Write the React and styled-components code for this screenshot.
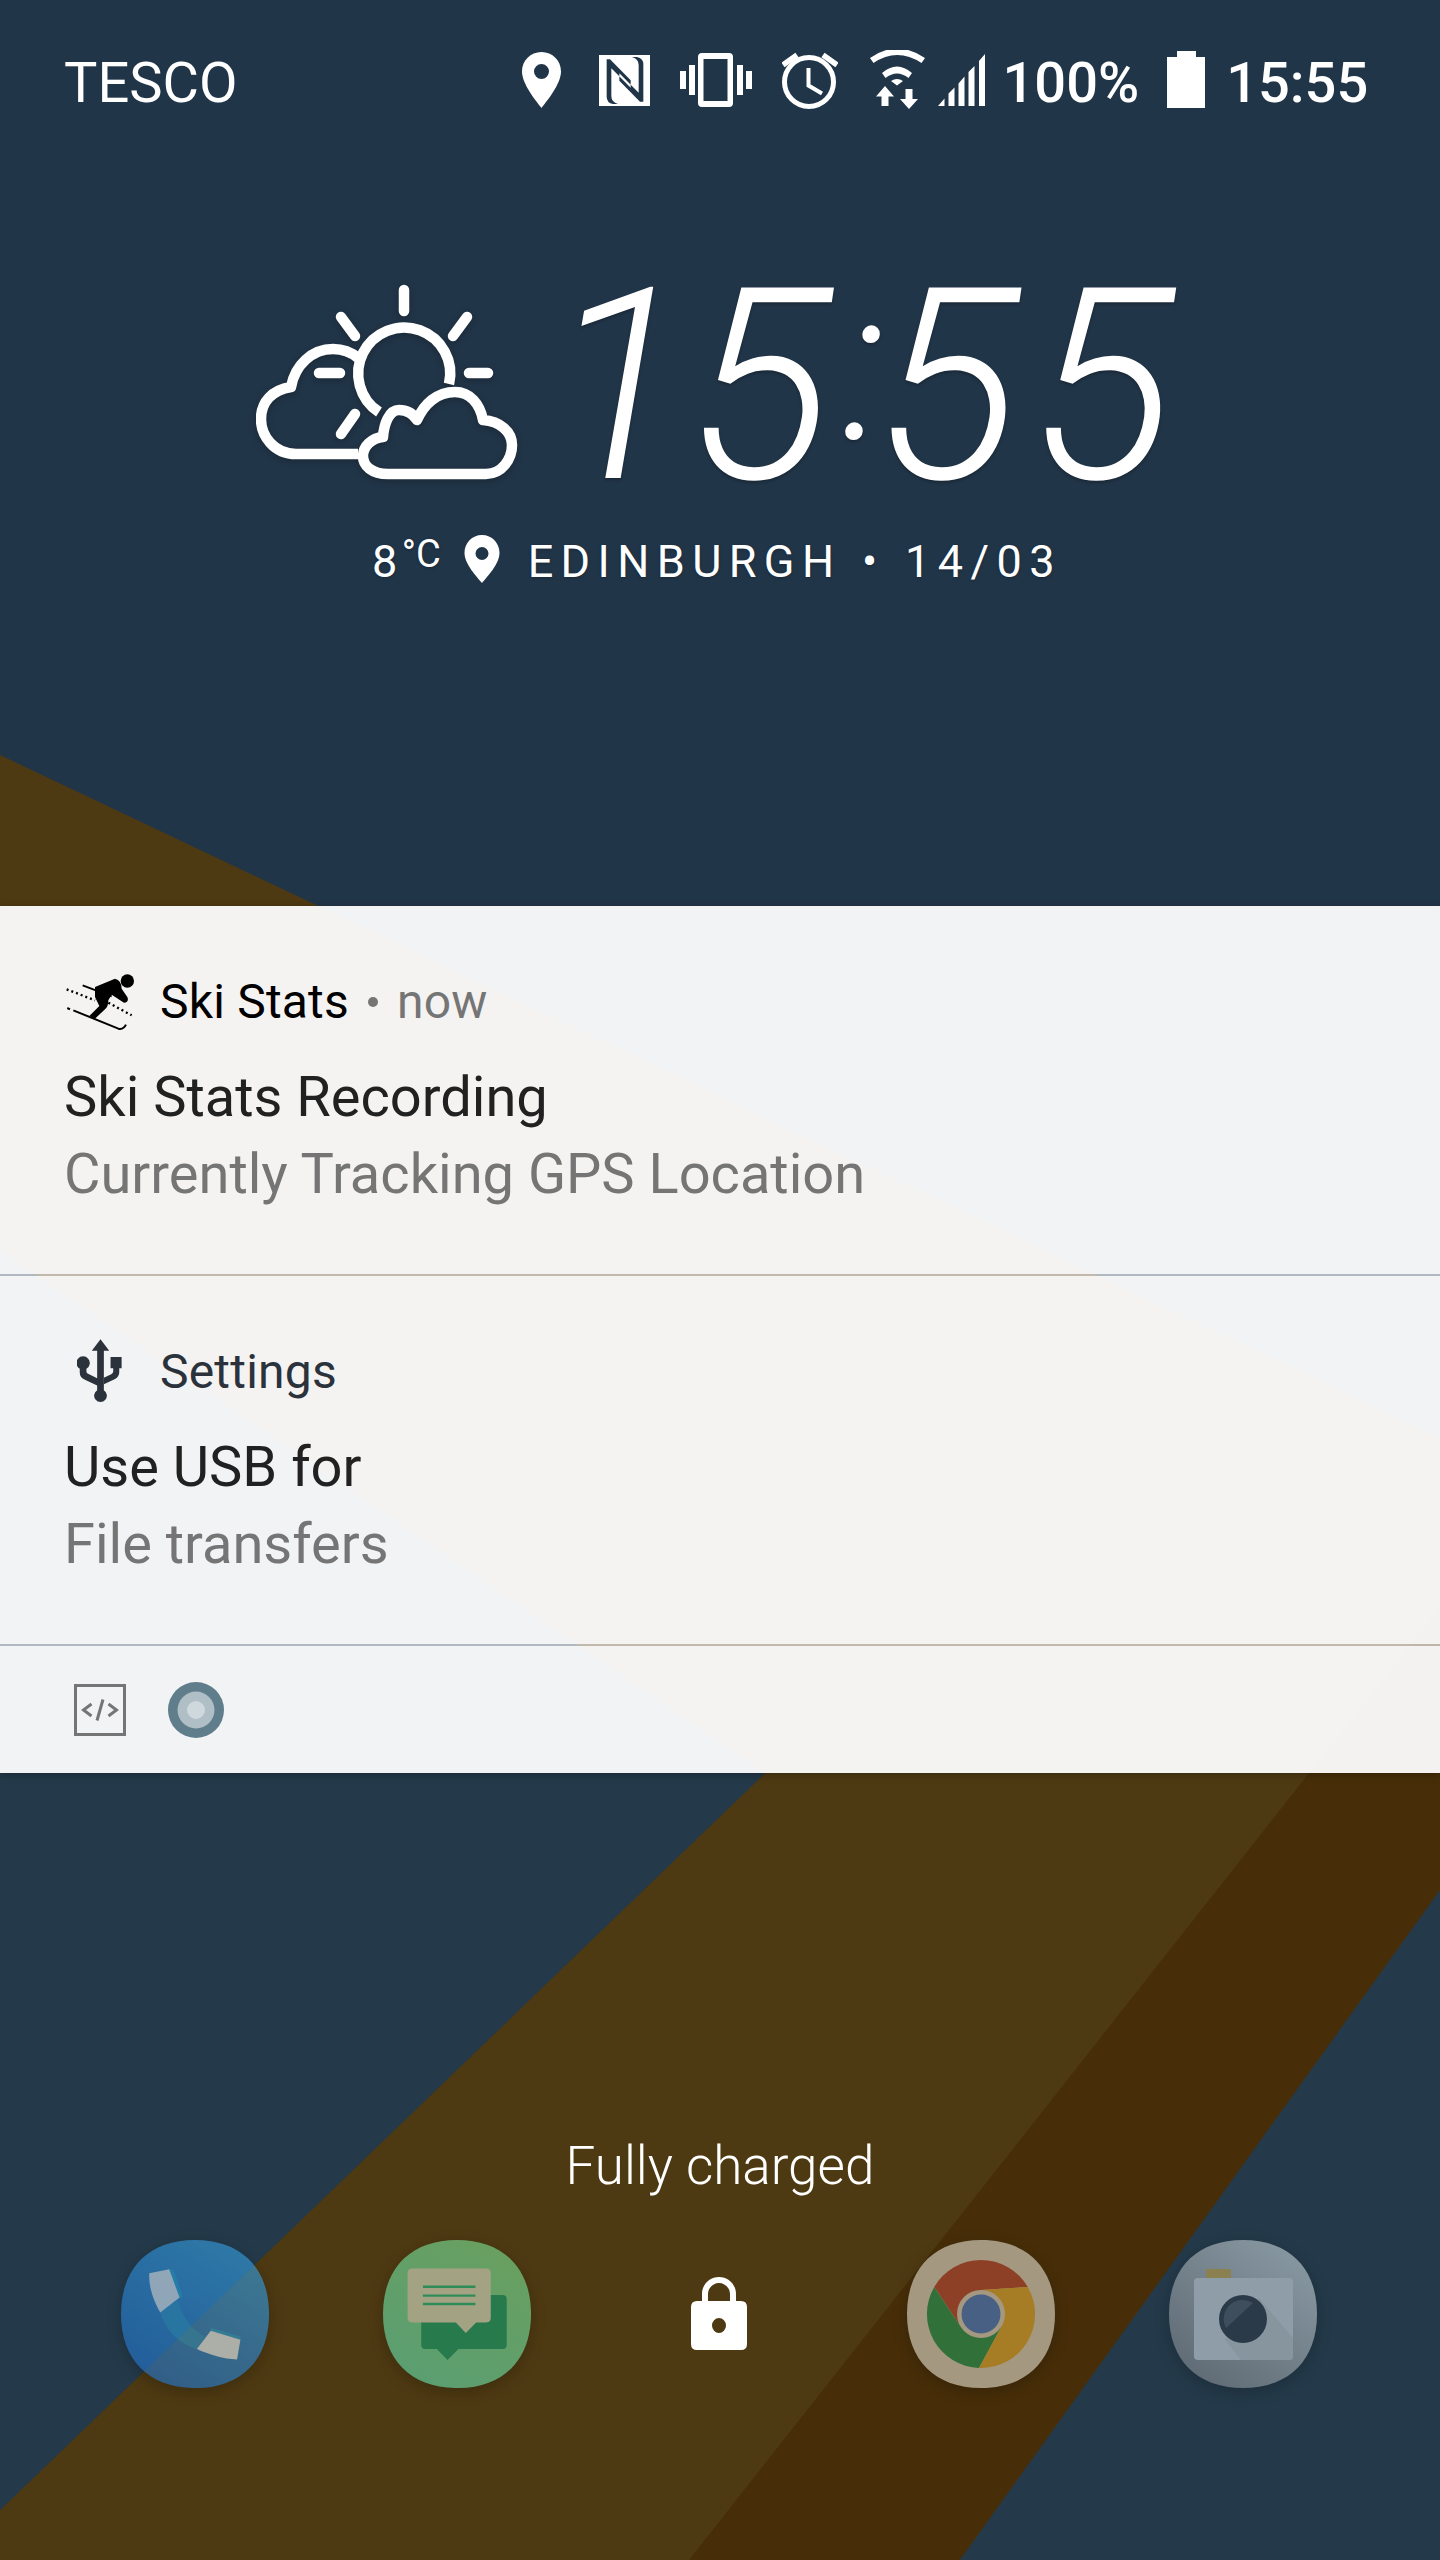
import React from "react";
import styled, { createGlobalStyle } from "styled-components";

const Global = createGlobalStyle`
  html, body { margin: 0; padding: 0; background: #213548; }
  body { font-family: Roboto, "Liberation Sans", sans-serif; }
`;

const Screen = styled.div`
  position: relative;
  width: 1440px;
  height: 2560px;
  overflow: hidden;
  background: #213548;
  color: #fff;
  display: flex;
  flex-direction: column;
`;
const WallpaperArt = styled.svg`
  position: absolute;
  inset: 0;
  width: 1440px;
  height: 2560px;
`;
const Layer = styled.div`
  position: relative;
  display: flex;
  flex-direction: column;
`;

/* status bar */
const StatusBar = styled.header`
  display: flex;
  align-items: flex-start;
  height: 60px;
  margin-top: 50px;
  padding-left: 64px;
`;
const StatusText = styled.span`
  font-size: 56px;
  line-height: 60px;
  padding-top: 3px;
  margin-left: ${p => p.$gap || 0}px;
  margin-right: ${p => p.$after || 0}px;
  font-weight: ${p => p.$weight || 400};
  white-space: nowrap;
`;
const StatusIcon = styled.svg`
  display: block;
  flex: none;
  height: 60px;
  margin-left: ${p => p.$gap || 0}px;
`;

/* hero */
const Hero = styled.section`
  display: flex;
  align-items: flex-start;
  height: 204px;
  margin-top: 170px;
  padding-left: 256px;
`;
const WeatherIcon = styled.svg`
  display: block;
  flex: none;
  width: 262px;
  height: 204px;
  filter: drop-shadow(0 2px 3px rgba(0,0,0,.25));
`;
const Clock = styled.div`
  margin-left: 28px;
  padding-top: 4px;
  font-size: 268px;
  line-height: 204px;
  font-weight: 300;
  font-style: italic;
  letter-spacing: 10.5px;
  white-space: nowrap;
  text-shadow: 0 2px 3px rgba(0,0,0,.25);
`;
const ClockOne = styled.span`
  letter-spacing: -3px;
`;
const ClockColon = styled.span`
  display: inline-block;
  font-size: 215px;
  letter-spacing: -12px;
  transform: translateY(-39px);
`;
const Location = styled.div`
  display: flex;
  align-items: flex-start;
  height: 60px;
  margin-top: 48px;
  padding-left: 372px;
  font-size: 45px;
  line-height: 60px;
  font-weight: 400;
  letter-spacing: 7.4px;
  word-spacing: 2px;
  white-space: nowrap;
  text-shadow: 0 1px 3px rgba(0,0,0,.25);
`;
const Degree = styled.span`
  font-size: 38px;
  line-height: 44px;
  margin-left: -3px;
  letter-spacing: 0;
`;
const LocationPin = styled.svg`
  display: block;
  flex: none;
  width: 36px;
  height: 60px;
  margin: 0 28px 0 23px;
`;

/* notifications */
const Panel = styled.section`
  display: flex;
  flex-direction: column;
  margin-top: 314px;
  box-shadow: 0 2px 8px rgba(0,0,0,.3);
`;
const Card = styled.article`
  height: 368px;
  box-sizing: border-box;
  padding: 66px 64px 0;
  background: rgba(255,255,255,.94);
`;
const Divider = styled.div`
  height: 2px;
  background: rgba(255,255,255,.65);
`;
const CardHead = styled.div`
  display: flex;
  align-items: center;
  height: 60px;
  font-size: 48px;
  line-height: 60px;
  letter-spacing: .2px;
  color: ${p => p.$color};
`;
const AppIconBox = styled.div`
  display: flex;
  justify-content: center;
  flex: none;
  width: 72px;
  margin-right: 24px;
`;
const AppGlyph = styled.svg`
  display: block;
  flex: none;
`;
const Dot = styled.span`
  width: 10px;
  height: 10px;
  border-radius: 50%;
  background: #757575;
  margin: 0 19px;
`;
const Since = styled.span`
  color: #757575;
`;
const CardTitle = styled.div`
  margin-top: 26px;
  font-size: 56px;
  line-height: 78px;
  color: #212121;
`;
const CardBody = styled.div`
  margin-top: -1px;
  font-size: 56px;
  line-height: 78px;
  color: #757575;
`;
const Shelf = styled.div`
  display: flex;
  align-items: center;
  height: 127px;
  padding-left: 74px;
  background: rgba(255,255,255,.94);
`;
const ShelfGlyph = styled.svg`
  display: block;
  flex: none;
  margin-right: ${p => p.$after || 0}px;
`;

/* bottom */
const Charged = styled.div`
  margin-top: 358px;
  text-align: center;
  font-size: 53px;
  line-height: 70px;
  font-weight: 300;
`;
const Dock = styled.div`
  display: grid;
  grid-template-columns: repeat(5, 262px);
  justify-content: center;
  margin-top: 39px;
  padding-right: 2px;
  height: 148px;
`;
const DockSlot = styled.div`
  display: flex;
  justify-content: center;
  align-items: center;
`;
const DockIcon = styled.svg`
  display: block;
  width: 148px;
  height: 148px;
  opacity: .65;
  filter: drop-shadow(0 4px 8px rgba(0,0,0,.35));
`;
const LockIcon = styled.svg`
  display: block;
  width: 56px;
  height: 73px;
  margin-top: -2px;
`;

const Squircle = "M74 0C120 0 148 28 148 74C148 120 120 148 74 148C28 148 0 120 0 74C0 28 28 0 74 0Z";

const Wallpaper = () => (
  <WallpaperArt viewBox="0 0 1440 2560">
    <rect width="1440" height="2560" fill="#213548" />
    <path d="M0 2560V2510L765 1773L0 1250V755L1440 1438V1890L960 2560Z" fill="#4e3a12" />
    <path d="M1440 1607V1890L960 2560H689L1309 1773Z" fill="#472e08" />
    <path d="M0 2510L765 1773H0Z" fill="#243a4a" />
    <path d="M1440 1890V2560H960Z" fill="#243a4a" />
  </WallpaperArt>
);

const App = () => (
  <Screen>
    <Global />
    <Wallpaper />
    <Layer>
      <StatusBar>
        <StatusText $after={285}>TESCO</StatusText>
        <StatusIcon viewBox="522 50 39 60" width="39" fill="#fff">
          <path fillRule="evenodd" d="M541.5 52C530.5 52 522 60.5 522 71.500C522 84 536 101 541.500 108C547 101 561 84 561 71.500C561 60.500 552.500 52 541.500 52ZM541.500 64A7.500 7.500 0 1 1 541.500 79A7.500 7.500 0 1 1 541.500 64Z" />
        </StatusIcon>
        <StatusIcon $gap={38} viewBox="297 30 153 180" width="51" fill="#fff">
          <path fillRule="evenodd" d="M297 45H450V198H297ZM320 58V170Q320 188 339 192H354Q334 186 334 168V85L392 143V121L330 58ZM430 185V73Q430 55 411 51H396Q416 57 416 75V158L358 100V122L420 185Z" />
        </StatusIcon>
        <StatusIcon $gap={30} viewBox="680 50 72 60" width="72" fill="#fff">
          <path fillRule="evenodd" d="M702 53H729Q733 53 733 57V103Q733 107 729 107H702Q698 107 698 103V57Q698 53 702 53ZM703.500 59V101H727.500V59Z" />
          <path d="M680 71H686V89H680ZM689 65H695V95H689ZM737 65H743V95H737ZM746 71H752V89H746Z" />
        </StatusIcon>
        <StatusIcon $gap={30} viewBox="780 50 56 60" width="56" fill="none" stroke="#fff" strokeWidth="5">
          <circle cx="807" cy="82" r="24.500" />
          <path d="M806.500 68V85.500L820 93.500" strokeWidth="4" />
          <path d="M781 65L795 55M821 55L835 65" strokeWidth="5.500" />
        </StatusIcon>
        <StatusIcon $gap={31} viewBox="868 50 56 60" width="56" fill="#fff">
          <path d="M869 58Q896 39 924 58L920.500 63Q896 47 872.500 63Z" />
          <path d="M881 73Q896 60 911 73L907.500 78Q896 69 884.500 78Z" />
          <path d="M890 81Q896 77 902 81L896 85.500Z" />
          <path d="M884 86L893 96.500H887.500V106H880.500V96.500H875Z" />
          <path d="M908 109L899 99H904.500V89H911.500V99H917Z" />
        </StatusIcon>
        <StatusIcon $gap={13} viewBox="937 50 47 60" width="47" fill="#fff">
          <path d="M937 106L943.500 98.500V106ZM947.500 106V93.500L953.500 87.500V106ZM957.500 106V83.500L963.500 76.500V106ZM967.500 106V72L973.500 66V106ZM978 106V61L984 54V106Z" />
        </StatusIcon>
        <StatusText $gap={17} $weight={500}>100%</StatusText>
        <StatusIcon $gap={28} viewBox="1167 50 38 60" width="38" fill="#fff">
          <path d="M1177 51H1196V57H1205V108H1167V57H1177Z" />
        </StatusIcon>
        <StatusText $gap={21} $weight={500}>15:55</StatusText>
      </StatusBar>

      <Hero>
        <WeatherIcon viewBox="256 280 262 204" fill="none" stroke="#fff" strokeWidth="10.500" strokeLinecap="round" strokeLinejoin="round">
          <path d="M404 290V311M341 317L355 336M467 317L453 336M319 373H340M469 373H488M341 434L355 414" />
          <path d="M379 412A46 46 0 1 1 449 384" strokeLinecap="butt" />
          <path d="M358 454H296C274 454 261 436 261 419C261 402 272 390 291 387C295 365 312 349 333 349C343 349 351 352 358 358" strokeLinecap="butt" />
          <path d="M388 474H486C502 474 512 459 512 445C512 432 500 421 483 420C480 404 470 392 455 392C437 392 424 404 417 420C412 412 405 410 399 410C389 410 384 424 383 437C372 438 363 446 363 456C363 466 372 474 388 474Z" />
        </WeatherIcon>
        <Clock><ClockOne>1</ClockOne>5<ClockColon>:</ClockColon>55</Clock>
      </Hero>

      <Location>
        <span>8</span>
        <Degree>°C</Degree>
        <LocationPin viewBox="466 532 36 60" fill="#fff">
          <path fillRule="evenodd" d="M484 535C474 535 466.500 543 466.500 553C466.500 564 479 577 484 583C489 577 501.500 564 501.500 553C501.500 543 494 535 484 535ZM484 547A6.500 6.500 0 1 1 484 560A6.500 6.500 0 1 1 484 547Z" />
        </LocationPin>
        <span>EDINBURGH • 14/03</span>
      </Location>

      <Panel>
        <Card>
          <CardHead $color="#000">
            <AppIconBox>
              <AppGlyph viewBox="75 60 210 180" width="70" height="60">
                <circle cx="262" cy="87" r="20" fill="#000" />
                <path d="M165 105L225 80Q245 85 245 110L262 135Q268 150 252 152L215 128L205 145Q205 165 195 172L165 200L148 192L178 162L165 135Z" fill="#000" />
                <path d="M128 100L215 133" stroke="#000" strokeWidth="6" fill="none" />
                <path d="M82 168L90 172M100 175L235 230Q250 234 258 218" stroke="#000" strokeWidth="6" fill="none" />
                <path d="M80 112L165 145M205 152L275 190" stroke="#000" strokeWidth="7" strokeDasharray="6 9" fill="none" />
              </AppGlyph>
            </AppIconBox>
            Ski Stats
            <Dot />
            <Since>now</Since>
          </CardHead>
          <CardTitle>Ski Stats Recording</CardTitle>
          <CardBody>Currently Tracking GPS Location</CardBody>
        </Card>
        <Divider />
        <Card>
          <CardHead $color="#2b323c">
            <AppIconBox>
              <AppGlyph viewBox="110 45 140 212" width="47" height="71" fill="#2b323c">
                <path d="M180 52L206 86H190V204A19 19 0 1 1 170 204V190L132 172Q118 165 118 150V140A20 20 0 1 1 138 140V148Q138 153 143 155L170 168V86H154Z" />
                <path d="M210 105H243V138H236V150Q236 164 222 171L190 186V167L212 156Q218 153 218 148V138H210Z" />
              </AppGlyph>
            </AppIconBox>
            Settings
          </CardHead>
          <CardTitle>Use USB for</CardTitle>
          <CardBody>File transfers</CardBody>
        </Card>
        <Divider />
        <Shelf>
          <ShelfGlyph $after={42} viewBox="0 0 52 52" width="52" height="52" fill="none" stroke="#757575">
            <rect x="1.500" y="1.500" width="49" height="49" strokeWidth="3" />
            <path d="M17.500 20L9.500 26L17.500 32M34.500 20L42.500 26L34.500 32" strokeWidth="3" />
            <path d="M29 15.500L23 36.500" strokeWidth="3" />
          </ShelfGlyph>
          <ShelfGlyph viewBox="0 0 56 56" width="56" height="56">
            <circle cx="28" cy="28" r="28" fill="#607d8b" />
            <circle cx="28" cy="28" r="18.500" fill="#b0bec5" />
            <circle cx="28" cy="28" r="9" fill="#cfd8dc" />
          </ShelfGlyph>
        </Shelf>
      </Panel>

      <Charged>Fully charged</Charged>

      <Dock>
        <DockSlot>
          <DockIcon viewBox="92 92 445 445">
            <defs>
              <linearGradient id="phoneBg" x1="0.8" y1="0" x2="0.2" y2="1">
                <stop offset="0" stopColor="#359cda" />
                <stop offset="1" stopColor="#2270c5" />
              </linearGradient>
            </defs>
            <path transform="translate(92 92) scale(3.007)" d={Squircle} fill="url(#phoneBg)" />
            <path d="M210 310C225 365 270 405 320 420L345 382C310 365 280 335 262 270Z" fill="#2b95d2" />
            <path d="M237 180L250 182L278 262L268 268Z" fill="#27a0d8" />
            <path d="M177 192L237 180L268 265L210 310C190 275 175 235 177 192Z" fill="#fff" opacity=".75" />
            <path d="M362 355L452 383L450 392L362 365Z" fill="#27a0d8" />
            <path d="M362 365L451 392L441 451C400 450 360 438 320 420Z" fill="#fff" opacity=".85" />
          </DockIcon>
        </DockSlot>
        <DockSlot>
          <DockIcon viewBox="878 92 445 445">
            <defs>
              <linearGradient id="msgBg" x1="0.8" y1="0" x2="0.2" y2="1">
                <stop offset="0" stopColor="#79d78a" />
                <stop offset="1" stopColor="#61d4a6" />
              </linearGradient>
            </defs>
            <path transform="translate(878 92) scale(3.007)" d={Squircle} fill="url(#msgBg)" />
            <path d="M1005 257H1238Q1250 257 1250 269V408Q1250 420 1238 420H1105L1072 453L1040 420H1005Q993 420 993 408V269Q993 257 1005 257Z" fill="#129d6c" />
            <path d="M966 178H1188Q1202 178 1202 192V326Q1202 340 1188 340H1158L1127 372L1097 340H966Q952 340 952 326V192Q952 178 966 178Z" fill="#d1dcc2" />
            <path d="M998 229H1156V236H998ZM998 256H1156V263H998ZM998 281H1156V288H998Z" fill="#1fb87f" />
          </DockIcon>
        </DockSlot>
        <DockSlot>
          <LockIcon viewBox="0 0 56 73" fill="#fff">
            <path fillRule="evenodd" d="M11 24V17C11 7.500 18.500 0 28 0C37.500 0 45 7.500 45 17V24H39V17C39 11 34 6 28 6C22 6 17 11 17 17V24Z" />
            <path fillRule="evenodd" d="M6 24H50Q56 24 56 30V67Q56 73 50 73H6Q0 73 0 67V30Q0 24 6 24ZM28 41A7 7.500 0 1 0 28 56A7 7.500 0 1 0 28 41Z" />
          </LockIcon>
        </DockSlot>
        <DockSlot>
          <DockIcon viewBox="0 0 148 148">
            <path d={Squircle} fill="#d7d1c3" />
            <path d="M27.200 47A54 54 0 0 1 120.800 47L74 50L53.200 86Z" fill="#b54a36" />
            <path d="M27.200 47A54 54 0 0 0 72 128L94.800 86L53.200 86Z" fill="#289455" />
            <path d="M120.800 47A54 54 0 0 1 72 128L94.800 86L74 50Z" fill="#d9a833" />
            <circle cx="74" cy="74" r="24" fill="#d7d1c3" />
            <circle cx="74" cy="74" r="19.500" fill="#4b7bc8" />
          </DockIcon>
        </DockSlot>
        <DockSlot>
          <DockIcon viewBox="0 0 148 148">
            <defs>
              <linearGradient id="camBg" x1="0.8" y1="0" x2="0.1" y2="0.9">
                <stop offset="0" stopColor="#becbd1" />
                <stop offset="1" stopColor="#80868c" />
              </linearGradient>
            </defs>
            <path d={Squircle} fill="url(#camBg)" />
            <path d="M37 38V30Q37 29 39 29H60Q62 29 62 31V38Z" fill="#c2a653" />
            <rect x="25" y="38" width="99" height="82" rx="4" fill="#c8d3d9" />
            <path d="M90 58L124 98V116Q124 120 120 120H72L56 100Z" fill="#bcc7cd" />
            <circle cx="74" cy="79" r="24" fill="#2e3a47" />
            <path d="M57 88A19 19 0 0 1 84 63Z" fill="#4e5a66" />
          </DockIcon>
        </DockSlot>
      </Dock>
    </Layer>
  </Screen>
);

export default App;
